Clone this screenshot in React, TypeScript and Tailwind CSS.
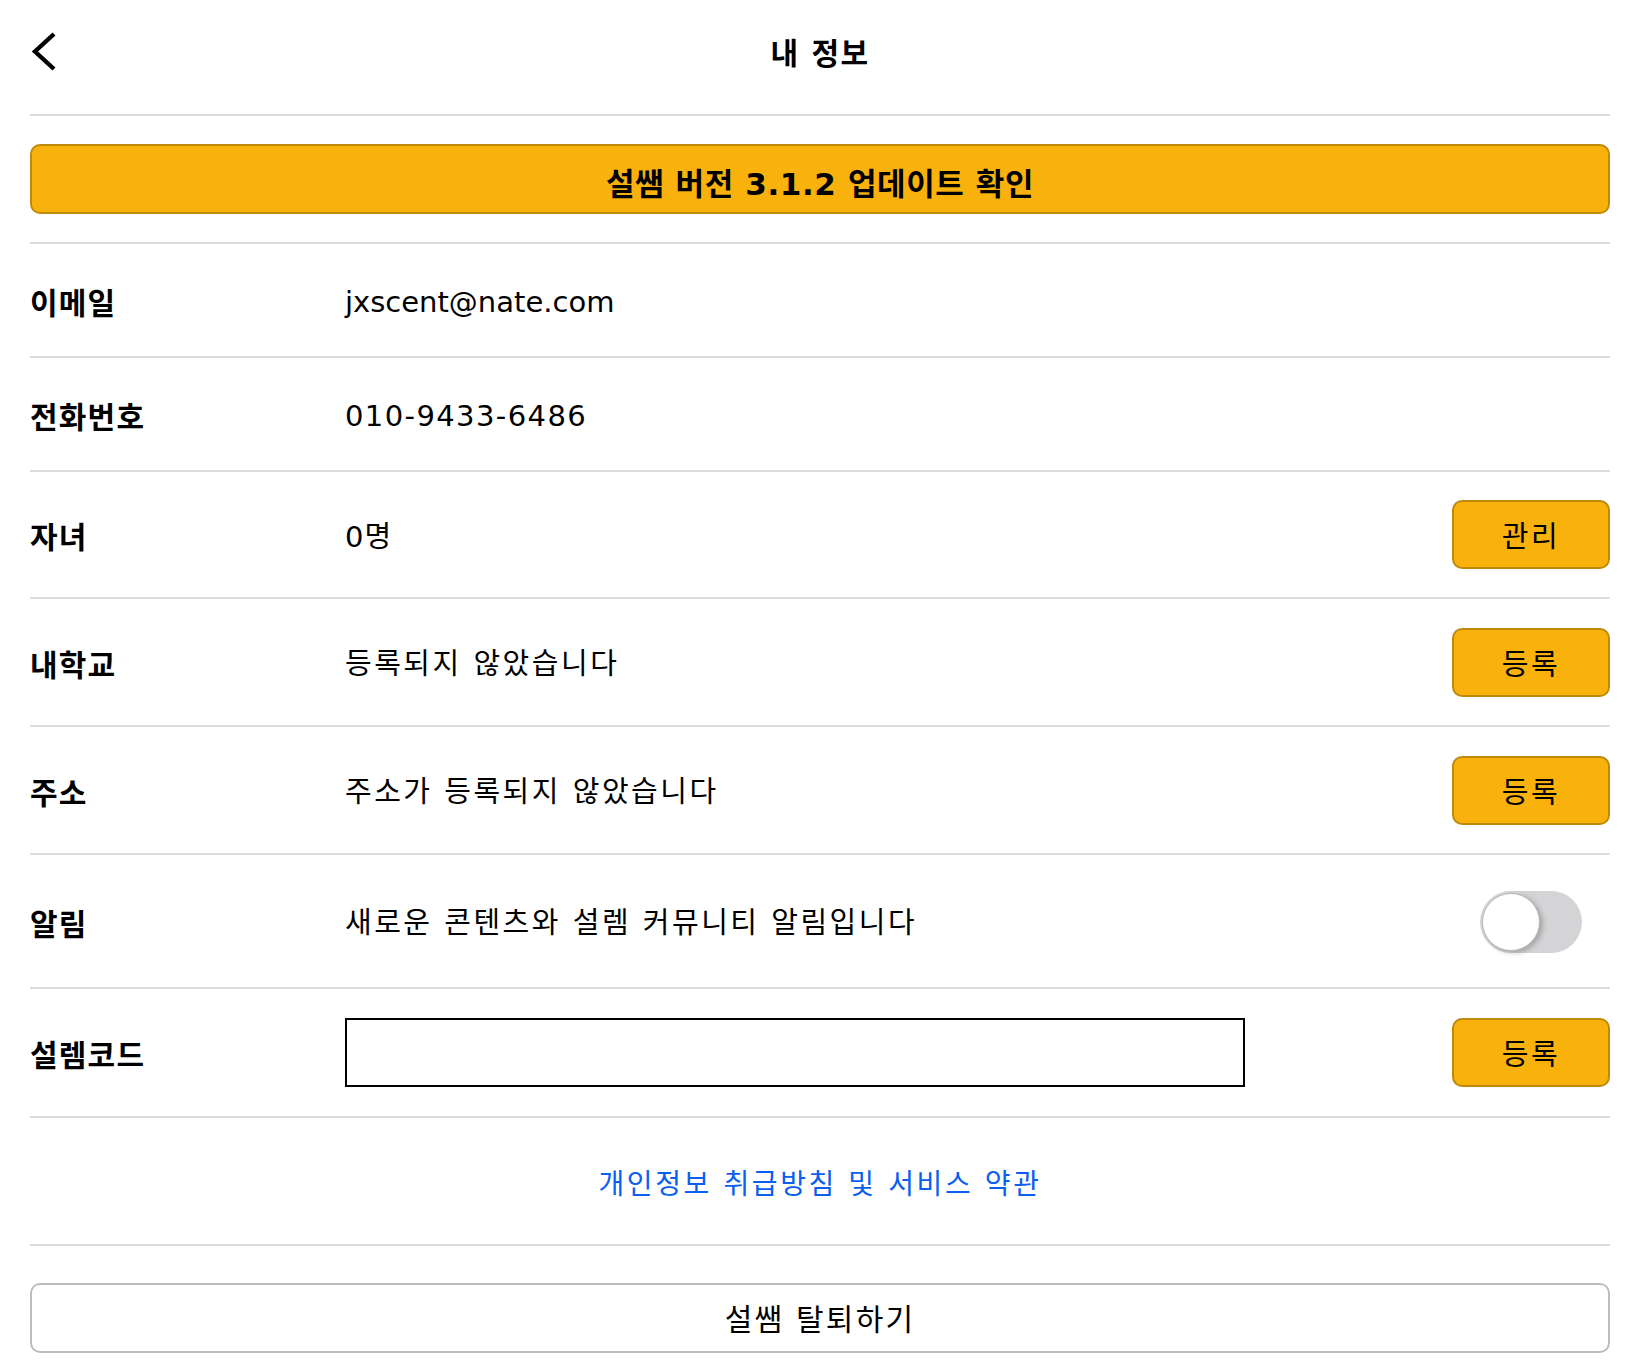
import { useState } from "react";

const BTN =
  "w-[158px] h-[69px] shrink-0 rounded-[10px] border-2 border-[#bf8a0c] bg-[#f9b10b] pt-[7px] text-[29px] tracking-[2.5px] text-black";

function Row({
  label,
  children,
  action,
  className = "",
}: {
  label: string;
  children?: React.ReactNode;
  action?: React.ReactNode;
  className?: string;
}) {
  return (
    <div className={`flex items-center border-b-2 border-[#dcdcdc] ${className}`}>
      <div className="w-[315px] shrink-0 pt-[6px] text-[30px] font-bold tracking-[1.2px] text-black">
        {label}
      </div>
      <div className="flex-1 min-w-0 pt-[6px] text-[29px] text-black">{children}</div>
      {action}
    </div>
  );
}

export default function App() {
  const [notify, setNotify] = useState(false);
  const [code, setCode] = useState("");

  return (
    <div className="min-h-screen bg-white px-[30px] font-['DejaVu_Sans','Noto_Sans_CJK_KR',sans-serif] text-black">
      {/* header */}
      <div className="h-[116px] border-b-2 border-[#dcdcdc]">
        <div className="grid grid-cols-[1fr_auto_1fr] items-center h-[104px]">
          <button className="ml-[1px] w-[30px] h-[44px] flex items-center">
            <svg width="28" height="44" viewBox="0 0 28 44" fill="none">
              <polyline points="23,4 4,21.5 23,39" stroke="black" strokeWidth="4.4" />
            </svg>
          </button>
          <h1 className="pt-[2px] text-[30px] font-bold tracking-[1.5px]">내 정보</h1>
          <div />
        </div>
      </div>

      {/* update */}
      <div className="py-[28px] border-b-2 border-[#dcdcdc]">
        <button className="w-full h-[70px] rounded-[10px] border-2 border-[#bf8a0c] bg-[#f9b10b] pt-[10px] text-[31px] font-bold tracking-[0.6px]">
          설쌤 버전 3.1.2 업데이트 확인
        </button>
      </div>

      <Row label="이메일" className="h-[114px]">
        jxscent@nate.com
      </Row>
      <Row label="전화번호" className="h-[114px]">
        <span className="tracking-[1.4px]">010-9433-6486</span>
      </Row>
      <Row label="자녀" className="h-[127px]" action={<button className={BTN}>관리</button>}>
        <span className="tracking-[1px]">0명</span>
      </Row>
      <Row label="내학교" className="h-[128px]" action={<button className={BTN}>등록</button>}>
        <span className="tracking-[2.5px]">등록되지 않았습니다</span>
      </Row>
      <Row label="주소" className="h-[128px]" action={<button className={BTN}>등록</button>}>
        <span className="tracking-[2.5px]">주소가 등록되지 않았습니다</span>
      </Row>
      <Row
        label="알림"
        className="h-[134px]"
        action={
          <button
            onClick={() => setNotify(!notify)}
            className={`mr-[28px] mt-[2px] w-[102px] h-[62px] rounded-full p-[2px] flex items-center transition-colors ${
              notify ? "bg-[#f9b10b] justify-end" : "bg-[#d4d4d7] justify-start"
            }`}
          >
            <span className="block w-[58px] h-[58px] rounded-full bg-white border border-[#b8b8b8] shadow-[3px_2px_5px_rgba(0,0,0,0.22)]" />
          </button>
        }
      >
        <span className="tracking-[2.5px]">새로운 콘텐츠와 설렘 커뮤니티 알림입니다</span>
      </Row>
      <Row label="설렘코드" className="h-[129px]" action={<button className={BTN}>등록</button>}>
        <input
          value={code}
          onChange={(e) => setCode(e.target.value)}
          className="-mt-[6px] w-[900px] h-[69px] border-2 border-black px-3 text-[28px] outline-none"
        />
      </Row>

      {/* terms */}
      <div className="h-[128px] flex items-center justify-center border-b-2 border-[#dcdcdc] pt-[8px]">
        <a className="text-[28px] tracking-[2.6px] text-[#0a5ef0] cursor-pointer">
          개인정보 취급방침 및 서비스 약관
        </a>
      </div>

      <div className="pt-[37px] pb-[17px]">
        <button className="w-full h-[70px] rounded-[10px] border-2 border-[#bdbdbd] bg-white pt-[3px] text-[30px] tracking-[2.2px]">
          설쌤 탈퇴하기
        </button>
      </div>
    </div>
  );
}
